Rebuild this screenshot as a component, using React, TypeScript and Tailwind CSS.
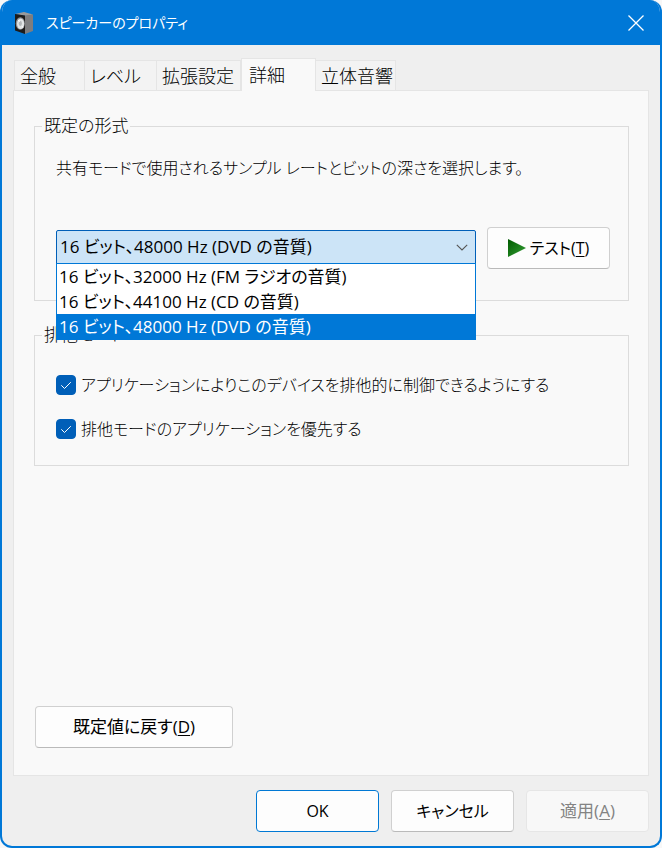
import { useState } from "react";
import type { ReactNode } from "react";

const tabs = [
  { id: "general", label: "全般", width: "w-[71px]" },
  { id: "level", label: "レベル", width: "w-[72px]" },
  { id: "enhance", label: "拡張設定", width: "w-[84px]" },
  { id: "advanced", label: "詳細", width: "w-[75px]" },
  { id: "spatial", label: "立体音響", width: "w-[80px]" },
];

const formats = [
  "16 ビット、32000 Hz (FM ラジオの音質)",
  "16 ビット、44100 Hz (CD の音質)",
  "16 ビット、48000 Hz (DVD の音質)",
];

function SpeakerIcon() {
  return (
    <svg width="20" height="22" viewBox="0 0 20 22" aria-hidden="true">
      <path d="M1 2 L10 0 L19 2.500 L12 4 Z" fill="#9a9a9a" />
      <path d="M11 3.500 L19 2.500 V19 L11 22 Z" fill="#7d7d7f" />
      <path d="M1 2 L11 3.500 V22 L1 18.500 Z" fill="#1d1b1a" />
      <ellipse cx="6.300" cy="11.500" rx="4.500" ry="6.200" fill="#8e9296" />
      <ellipse cx="6.600" cy="11.700" rx="3.600" ry="5.200" fill="#e2e5e6" />
      <ellipse cx="6.300" cy="11.500" rx="1.600" ry="2.400" fill="#b4b8ba" />
      <path d="M4 8 L6 9.500 M8 14 L9 15.500" stroke="#fff" strokeWidth="1" />
    </svg>
  );
}

function Key({ children }: { children: string }) {
  return (
    <>
      (<span className="underline decoration-1 underline-offset-2">{children}</span>)
    </>
  );
}

function PushButton({
  children,
  width,
  primary = false,
  disabled = false,
}: {
  children: ReactNode;
  width: string;
  primary?: boolean;
  disabled?: boolean;
}) {
  const tone = disabled
    ? "border-[#e6e6e6] bg-[#f8f8f8] text-[#838383]"
    : primary
      ? "border-[#0078d4] bg-[#fdfdfd] text-black"
      : "border-[#d0d0d0] border-b-[#bababa] bg-[#fdfdfd] text-black";
  return (
    <button
      type="button"
      disabled={disabled}
      className={`flex h-[42px] shrink-0 items-center justify-center rounded border ${width} ${tone}`}
    >
      {children}
    </button>
  );
}

function CheckRow({ id, label }: { id: string; label: string }) {
  const [checked, setChecked] = useState(true);
  return (
    <div className="flex h-6 items-center gap-[5px]">
      <span className="grid size-5 shrink-0">
        <input
          id={id}
          type="checkbox"
          checked={checked}
          onChange={(e) => setChecked(e.target.checked)}
          className="col-start-1 row-start-1 size-5 appearance-none rounded border border-[#868686] bg-white checked:border-[#005fb8] checked:bg-[#005fb8]"
        />
        {checked && (
          <svg viewBox="0 0 20 20" className="pointer-events-none col-start-1 row-start-1 size-5" aria-hidden="true">
            <path d="M5.300 10.300 L8.500 13.500 L14.800 7.200" fill="none" stroke="#fff" strokeWidth="1" />
          </svg>
        )}
      </span>
      <label htmlFor={id}>{label}</label>
    </div>
  );
}

export default function App() {
  const [format, setFormat] = useState(formats[2]);
  return (
    <div className="min-h-screen bg-[#f7f7f7] font-['Open_Sans','Noto_Sans_CJK_JP',sans-serif] text-[16px] leading-6 text-black">
      <main
        lang="ja"
        className="flex min-h-screen flex-col overflow-hidden rounded-xl border-2 border-t-0 border-[#0078d7] bg-[#efefef] [font-feature-settings:'palt']"
      >
        <header className="flex h-[45px] shrink-0 items-center bg-[#0078d7] pr-4 pl-3 text-white">
          <SpeakerIcon />
          <h1 className="ml-3 flex-1 text-[14px]">スピーカーのプロパティ</h1>
          <button type="button" aria-label="閉じる" className="size-4">
            <svg viewBox="0 0 16 16" className="size-4" aria-hidden="true">
              <path d="M0.500 0.500 L15.500 15.500 M15.500 0.500 L0.500 15.500" stroke="#fff" strokeWidth="1.300" />
            </svg>
          </button>
        </header>

        <div className="flex flex-1 flex-col px-[11px] pt-[13px]">
          <div role="tablist" className="z-10 -mb-px flex items-end pl-px text-[18px] font-light">
            {tabs.map((tab) =>
              tab.id === "advanced" ? (
                <button
                  key={tab.id}
                  type="button"
                  role="tab"
                  aria-selected="true"
                  className={`flex h-[33px] items-center border border-b-0 border-[#e5e5e5] bg-[#f9f9f9] pl-[7px] ${tab.width}`}
                >
                  {tab.label}
                </button>
              ) : (
                <button
                  key={tab.id}
                  type="button"
                  role="tab"
                  aria-selected="false"
                  className={`flex h-[31px] items-center border border-l-0 border-[#e5e5e5] bg-[#f3f3f3] pl-[5px] whitespace-nowrap first:border-l ${tab.width}`}
                >
                  {tab.label}
                </button>
              ),
            )}
          </div>

          <section
            role="tabpanel"
            className="flex flex-1 flex-col border border-[#e5e5e5] bg-[#f9f9f9] pt-[23px] pr-[19px] pb-[27px] pl-5"
          >
            <fieldset className="border border-[#dcdcdc] pr-[18px] pb-[31px] pl-[21px]">
              <legend className="-ml-[14px] px-0.5 text-[17px] font-light">既定の形式</legend>
              <p className="mt-[18px] font-light whitespace-nowrap">
                共有モードで使用されるサンプル レートとビットの深さを選択します。
              </p>
              <div className="mt-[47px] flex items-start gap-[11px]">
                <div className="relative mt-[3px] min-w-0 flex-1 text-[17px]">
                  <select
                    aria-label="既定の形式"
                    value={format}
                    onChange={(e) => setFormat(e.target.value)}
                    className="block h-[34px] w-full appearance-none rounded-t-xs border border-[#005fb8] bg-[#cce4f7] pl-[3px]"
                  >
                    {formats.map((f) => (
                      <option key={f}>{f}</option>
                    ))}
                  </select>
                  <svg
                    viewBox="0 0 12 8"
                    className="pointer-events-none absolute top-3.5 right-2 h-2 w-3"
                    aria-hidden="true"
                  >
                    <path d="M0.800 0.800 L6 6 L11.200 0.800" fill="none" stroke="#555" strokeWidth="1.100" />
                  </svg>
                  <ul
                    role="listbox"
                    aria-label="形式の一覧"
                    className="absolute inset-x-0 top-full z-20 -mt-px border border-[#0078d7] bg-white"
                  >
                    {formats.map((f) => (
                      <li
                        key={f}
                        role="option"
                        aria-selected={f === format}
                        onClick={() => setFormat(f)}
                        className="h-[25px] pl-0.5 leading-[25px] whitespace-nowrap aria-selected:bg-[#0078d7] aria-selected:text-white"
                      >
                        {f}
                      </li>
                    ))}
                  </ul>
                </div>
                <PushButton width="w-[123px]">
                  <svg viewBox="0 0 18 18" className="mr-1 size-[18px]" aria-hidden="true">
                    <defs>
                      <linearGradient id="play" x1="0" y1="0" x2="1" y2="1">
                        <stop offset="0" stopColor="#005a00" />
                        <stop offset="1" stopColor="#35a035" />
                      </linearGradient>
                    </defs>
                    <path d="M0 0 L18 9 L0 18 Z" fill="url(#play)" />
                  </svg>
                  <span>
                    テスト
                    <Key>T</Key>
                  </span>
                </PushButton>
              </div>
            </fieldset>

            <fieldset className="mt-[22px] border border-[#dcdcdc] px-[21px] pb-6">
              <legend className="-ml-[14px] px-0.5 text-[17px] font-light">排他モード</legend>
              <div className="mt-[26px] flex flex-col gap-5 font-light whitespace-nowrap">
                <CheckRow id="exclusive" label="アプリケーションによりこのデバイスを排他的に制御できるようにする" />
                <CheckRow id="priority" label="排他モードのアプリケーションを優先する" />
              </div>
            </fieldset>

            <div className="mt-auto ml-px text-[17px]">
              <PushButton width="w-[198px]">
                <span>
                  既定値に戻す
                  <Key>D</Key>
                </span>
              </PushButton>
            </div>
          </section>

          <footer className="flex justify-end gap-3 pt-3.5 pb-3.5">
            <PushButton width="w-[123px]" primary>
              OK
            </PushButton>
            <PushButton width="w-[123px]">キャンセル</PushButton>
            <PushButton width="w-[123px]" disabled>
              <span className="text-[17px]">
                適用
                <Key>A</Key>
              </span>
            </PushButton>
          </footer>
        </div>
      </main>
    </div>
  );
}
